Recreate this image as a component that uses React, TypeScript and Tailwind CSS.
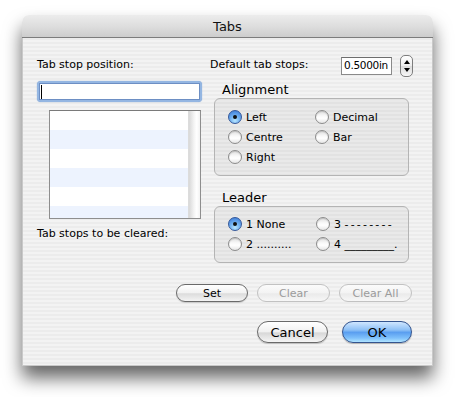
import React from 'react';

const rowBg = ['bg-white', 'bg-[#edf3fe]', 'bg-white', 'bg-[#edf3fe]', 'bg-white', 'bg-[#edf3fe]'];

const Radio: React.FC<{ label: React.ReactNode; checked?: boolean }> = ({ label, checked = false }) => (
  <div className="flex items-center h-[20px]">
    <span
      className={`flex items-center justify-center w-[14px] h-[14px] rounded-full border ${
        checked
          ? 'border-[#34589a] bg-[radial-gradient(circle_at_50%_80%,#b8e6ff_0%,#6eaef0_45%,#3674d2_100%)]'
          : 'border-[#8c8c8c] bg-[linear-gradient(180deg,#dedede_0%,#f8f8f8_40%,#ffffff_60%,#e6e6e6_100%)] shadow-[inset_0_1px_1px_rgba(0,0,0,0.15)]'
      }`}
    >
      {checked && <span className="w-[4px] h-[4px] rounded-full bg-[#101010]" />}
    </span>
    <span className="ml-[4px] text-[11px] leading-none text-black whitespace-pre">{label}</span>
  </div>
);

const SmallButton: React.FC<{ label: string; width: string; disabled?: boolean }> = ({ label, width, disabled }) => (
  <div
    className={`${width} h-[18px] rounded-full border flex items-center justify-center text-[11px] leading-none ${
      disabled
        ? 'border-[#c2c2c2] text-[#9b9b9b] bg-[linear-gradient(180deg,#fbfbfb_0%,#f3f3f3_50%,#eaeaea_55%,#f7f7f7_100%)]'
        : 'border-[#6a6a6a] text-black bg-[linear-gradient(180deg,#ffffff_0%,#f2f2f2_48%,#dcdcdc_55%,#f4f4f4_100%)] shadow-[0_1px_1px_rgba(0,0,0,0.15)]'
    }`}
  >
    {label}
  </div>
);

export default function App() {
  return (
    <div className="w-[463px] h-[397px] bg-white overflow-hidden pt-[15px] pl-[22px] font-['DejaVu_Sans',sans-serif] text-black">
      <div className="w-[411px] rounded-t-[7px] shadow-[0_12px_18px_rgba(0,0,0,0.6)]">
        {/* title bar */}
        <div className="h-[23px] rounded-t-[7px] border-b border-[#7c7c7c] bg-[linear-gradient(180deg,#ececec_0%,#dedede_50%,#cdcdcd_100%)] flex items-center justify-center">
          <span className="text-[13px] leading-none text-[#111]">Tabs</span>
        </div>

        {/* body */}
        <div className="h-[328px] pt-[16px] bg-[image:repeating-linear-gradient(180deg,#ececec_0px,#ececec_2px,#f3f3f3_2px,#f3f3f3_4px)] border-x border-b border-[#c9c9c9]">
          <div className="flex pl-[14px] gap-[8px]">
            {/* left column */}
            <div className="w-[165px] flex flex-col">
              <div className="h-[23px] flex items-center text-[11px]">Tab stop position:</div>
              <div className="mt-[4px] h-[21px] rounded-[4px] bg-[#94b6e2] p-[2px] shadow-[0_0_1px_#6f95cc]">
                <div className="h-full bg-white border border-[#6d8fc4] flex items-center pl-[1px]">
                  <span className="w-px h-[14px] bg-black" />
                </div>
              </div>
              <div className="mt-[8px] ml-[12px] w-[152px] h-[109px] border border-[#8e8e8e] border-t-[#7a7a7a] flex overflow-hidden">
                <div className="flex-1 flex flex-col">
                  {rowBg.map((c, i) => (
                    <div key={i} className={`h-[19px] shrink-0 ${c}`} />
                  ))}
                </div>
                <div className="w-[12px] bg-[linear-gradient(90deg,#d8d8d8_0%,#f4f4f4_45%,#ffffff_70%,#f2f2f2_100%)] border-l border-[#dcdcdc]" />
              </div>
              <div className="mt-[8px] h-[14px] flex items-center text-[11px]">Tab stops to be cleared:</div>
            </div>

            {/* right column */}
            <div className="w-[203px] flex flex-col">
              <div className="h-[23px] flex items-center">
                <span className="text-[11px]">Default tab stops:</span>
                <div className="ml-auto w-[51px] h-[18px] bg-white border border-[#8a8a8a] border-t-[#6e6e6e] flex items-center pl-[2px] text-[10.5px] tracking-[-0.3px] leading-none overflow-hidden whitespace-nowrap">
                  0.5000in
                </div>
                <div className="ml-[8px] w-[13px] h-[22px] rounded-[5px] border border-[#7e7e7e] bg-[linear-gradient(180deg,#ffffff_0%,#ededed_50%,#dcdcdc_52%,#f6f6f6_100%)] flex flex-col items-center justify-between py-[4px]">
                  <span className="w-0 h-0 border-l-[3px] border-r-[3px] border-b-[4px] border-l-transparent border-r-transparent border-b-black" />
                  <span className="w-0 h-0 border-l-[3px] border-r-[3px] border-t-[4px] border-l-transparent border-r-transparent border-t-black" />
                </div>
              </div>

              <div className="pt-[5px] h-[21px] pl-[12px] text-[13px] leading-[16px]">Alignment</div>
              <div className="mx-[4px] h-[78px] rounded-[6px] border border-[#b4b4b4] bg-[rgba(0,0,0,0.04)] pt-[8px] pl-[13px] flex">
                <div className="w-[87px] flex flex-col">
                  <Radio label="Left" checked />
                  <Radio label="Centre" />
                  <Radio label="Right" />
                </div>
                <div className="flex flex-col">
                  <Radio label="Decimal" />
                  <Radio label="Bar" />
                </div>
              </div>

              <div className="mt-[14px] h-[16px] pl-[12px] text-[13px] leading-[16px]">Leader</div>
              <div className="mx-[4px] h-[57px] rounded-[6px] border border-[#b4b4b4] bg-[rgba(0,0,0,0.04)] pt-[7px] pl-[13px] flex">
                <div className="w-[88px] flex flex-col">
                  <Radio label="1 None" checked />
                  <Radio label="2 .........." />
                </div>
                <div className="flex flex-col">
                  <Radio label={<>3 <span className="tracking-[2.2px]">--------</span></>} />
                  <Radio label="4 _________." />
                </div>
              </div>
            </div>
          </div>

          {/* button rows */}
          <div className="mt-[21px] flex justify-end pr-[20px] gap-[9px]">
            <SmallButton label="Set" width="w-[72px]" />
            <SmallButton label="Clear" width="w-[73px]" disabled />
            <SmallButton label="Clear All" width="w-[73px]" disabled />
          </div>
          <div className="mt-[19px] flex justify-end pr-[20px] gap-[14px]">
            <div className="w-[71px] h-[22px] rounded-full border border-[#6a6a6a] bg-[linear-gradient(180deg,#ffffff_0%,#f1f1f1_48%,#d8d8d8_55%,#f5f5f5_100%)] shadow-[0_1px_1px_rgba(0,0,0,0.2)] flex items-center justify-center text-[13px] leading-none">
              Cancel
            </div>
            <div className="w-[70px] h-[22px] rounded-full border border-[#34548e] bg-[linear-gradient(180deg,#cfe6ff_0%,#8dc0f6_40%,#5a9ef0_52%,#7ec0fb_80%,#b0e4ff_100%)] shadow-[0_1px_1px_rgba(0,0,0,0.25)] flex items-center justify-center text-[13px] leading-none">
              OK
            </div>
          </div>
        </div>
      </div>
    </div>
  );
}
